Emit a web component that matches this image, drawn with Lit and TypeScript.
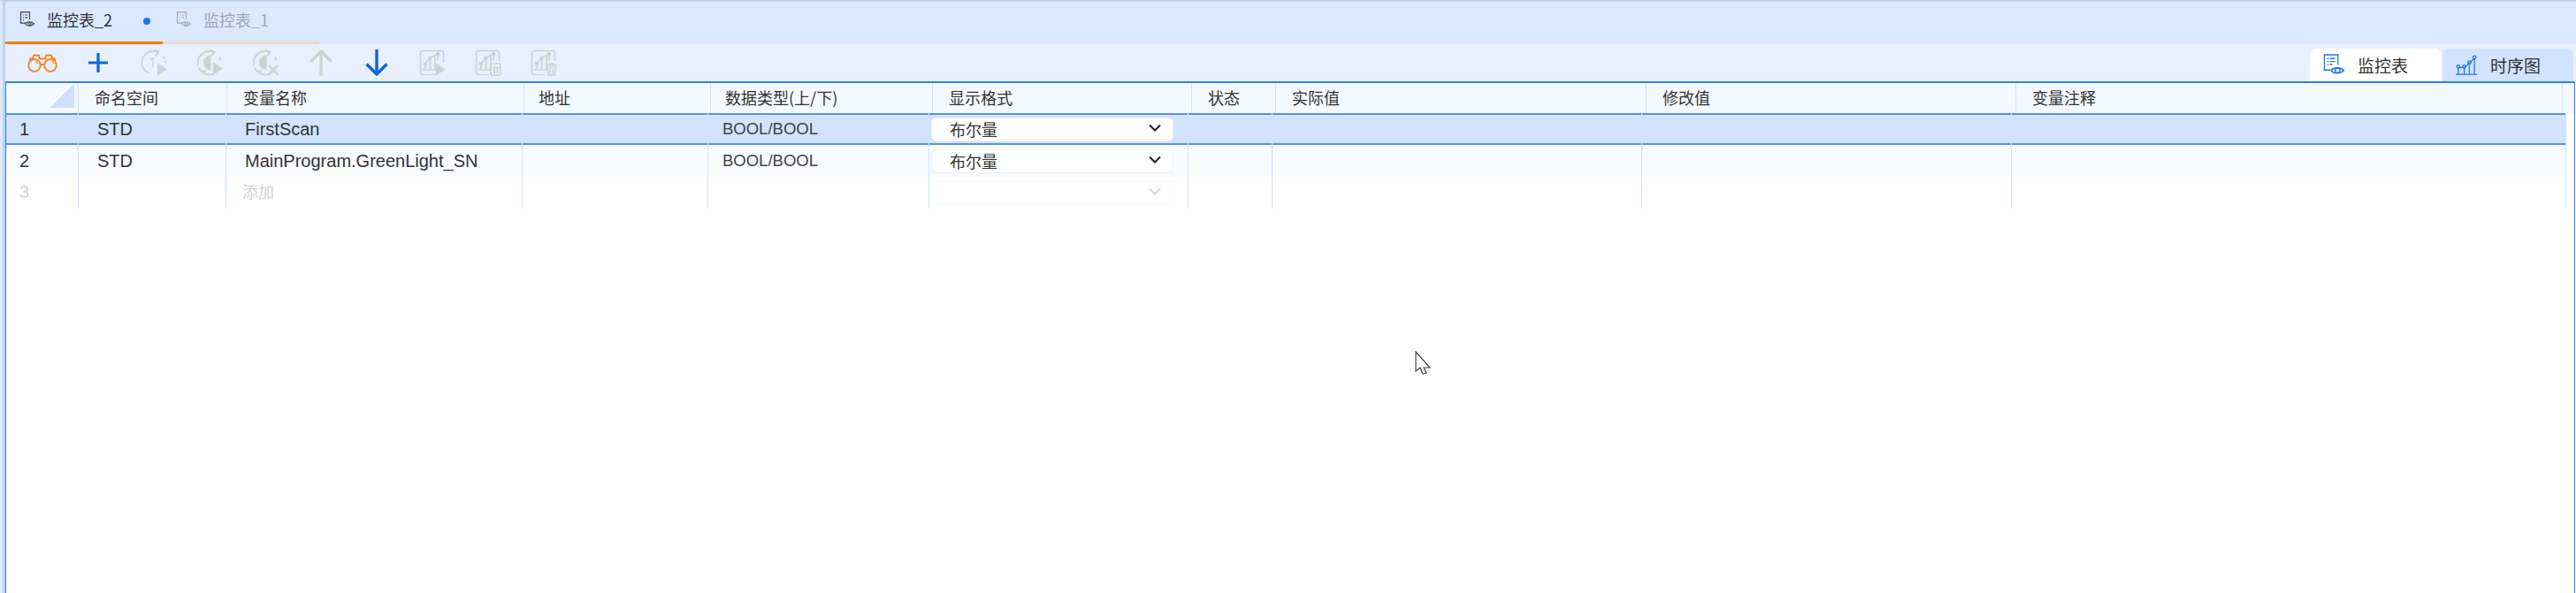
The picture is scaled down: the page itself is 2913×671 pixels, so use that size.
import { LitElement, html, css, svg } from "lit";
import { customElement } from "lit/decorators.js";

const G = "#cfd2d4";

const ic = {
  doc: (c: string) => html`<svg viewBox="0 0 24 24" width="20" height="20" fill="none" stroke=${c} stroke-width="1.4"><path d="M10 17H3V2h12v10"/><path d="M6 6h1M9 6h3M6 9.500h1M9 9.500h3M6 13h1"/><path d="M9 18c2-3.500 9-3.500 12 0-3 3.500-10 3.500-12 0z"/><circle cx="15" cy="18" r="1.800"/></svg>`,
  glasses: html`<svg viewBox="0 0 34 24" width="34" height="24" fill="none" stroke="#f5821f" stroke-width="1.800"><circle cx="8" cy="15" r="6.800"/><circle cx="26" cy="15" r="6.800"/><path d="M14.800 14h4.400"/><path d="M3 10V7.500h3.500V5c0-1 .5-1.500 1.500-1.500h4c1 0 1.500.5 1.500 1.500v2.500h7V5c0-1 .5-1.500 1.500-1.500h4c1 0 1.500.5 1.500 1.500v2.500H31V10"/><path d="M9 10.500c1.500.3 2.500 1.200 3 2.500M27 10.500c1.500.3 2.500 1.200 3 2.500" stroke-width="1.200"/></svg>`,
  plus: html`<svg viewBox="0 0 22 22" width="22" height="22" stroke="#0b66e4" stroke-width="3.200" fill="none"><path d="M11 0v22M0 11h22"/></svg>`,
  cycleOne: html`<svg viewBox="0 0 30 30" width="30" height="30" fill="none" stroke=${G} stroke-width="1.800"><path d="M19 2.600A13 13 0 1 0 10 27"/><path d="M15.500 0l5 2.800-3.500 4.400"/><path d="M26 8a13 13 0 0 1 2 7" stroke-dasharray="3 2"/><path d="M19 15.500v14l11-7z" fill=${G} stroke="none"/><path d="M11 12l3-2.500V20" stroke-width="1.300"/></svg>`,
  cycleHalf: (x: boolean) => html`<svg viewBox="0 0 30 30" width="30" height="30" fill="none" stroke=${G} stroke-width="1.900"><path d="M19.500 2.800A13 13 0 0 0 2.200 18"/><path d="M15.500 0l5 2.800-3.500 4.400"/><path d="M26 8a13 13 0 0 1 1.500 4"/><path d="M20 27.500A13 13 0 0 1 6 24.500"/><path d="M2.500 21l3.500 4 5-1"/><path d="M16.500 6.500a8.500 8.500 0 0 0 0 17z" fill=${G} stroke="none"/>${x ? svg`<path d="M19 18l10 10.500M29 18L19 28.500" stroke-width="2.600"/>` : svg`<path d="M19 14v15l11-7.500z" fill=${G} stroke="none"/>`}</svg>`,
  up: html`<svg viewBox="0 0 26 30" width="26" height="30" fill="none" stroke=${G} stroke-width="3.400"><path d="M13 30V2M1.500 13.500L13 2l11.500 11.500"/></svg>`,
  down: html`<svg viewBox="0 0 26 30" width="26" height="30" fill="none" stroke="#0b66e4" stroke-width="3.400"><path d="M13 0v28M1.500 16.500L13 28l11.500-11.500"/></svg>`,
  trend: (kind: string) => html`<svg viewBox="0 0 30 30" width="30" height="30" fill="none" stroke=${G} stroke-width="1.700"><path d="M${kind === "play" ? "19 28.500H4" : "16 28.500H4"}a2.500 2.500 0 0 1-2.500-2.500V4A2.500 2.500 0 0 1 4 1.500h21A2.500 2.500 0 0 1 27.500 4v${kind === "play" ? 11 : 9}"/><path d="M4 23h14M7 23v-7l5.500-6.500L21 5M12.500 23V9.500M18 23V7M21 5v8"/><circle cx="7" cy="16" r="1.400" fill=${G}/><circle cx="12.500" cy="9.500" r="1.400" fill=${G}/><circle cx="21" cy="5" r="1.400" fill=${G}/>
    ${kind === "play" ? svg`<path d="M19 15.500v14l11-7z" fill=${G} stroke="none"/>` : kind === "pause" ? svg`<rect x="18" y="16" width="11" height="13" rx="1.500"/><path d="M22 19v8M25.500 19v8" stroke-width="2"/>` : svg`<path d="M17 18h13M21 18v-2h5v2" stroke-width="1.600"/><path d="M19 20.500h9l-.8 8.500h-7.400z"/><path d="M22 22.500v5M25 22.500v5" stroke-width="1.500"/>`}</svg>`,
  watch: html`<svg viewBox="0 0 26 26" width="25" height="25" fill="none" stroke="#1f76ee" stroke-width="1.400"><path d="M8.500 19H1.500V1h16v12"/><path d="M5 5.500h1.500M8 5.500h6M5 9h1.500M8 9h6M5 12.500h1.500M8 12.500h3"/><path d="M9.500 19.500c3-4 11-4 15 0-4 4-12 4-15 0z" stroke-width="1.600"/><circle cx="17" cy="19.500" r="2.800"/></svg>`,
  seq: html`<svg viewBox="0 0 26 26" width="25" height="25" fill="none" stroke="#1f76ee" stroke-width="1.300"><path d="M0 24h25M3 24v-8M10 24v-8M16 24V11M22 24V5M3 16h7M10 16l6-5M16 11l6-6"/><circle cx="3" cy="15" r="1.800"/><circle cx="10" cy="15" r="1.800"/><circle cx="16" cy="10" r="1.800"/><circle cx="22" cy="4" r="1.800"/></svg>`,
  chev: (c: string) => html`<svg viewBox="0 0 14 9" width="14" height="9" fill="none" stroke=${c} stroke-width="2"><path d="M1 1.500l6 6 6-6"/></svg>`,
};

type Row = { n: string; ns: string; name: string; type: string; fmt: string; cls: string };
const rows: Row[] = [
  { n: "1", ns: "STD", name: "FirstScan", type: "BOOL/BOOL", fmt: "布尔量", cls: "sel" },
  { n: "2", ns: "STD", name: "MainProgram.GreenLight_SN", type: "BOOL/BOOL", fmt: "布尔量", cls: "alt" },
  { n: "3", ns: "", name: "添加", type: "", fmt: "", cls: "ghost" },
];

@customElement("app-root")
export class AppRoot extends LitElement {
  static styles = css`
    :host { display: block; position: relative; height: 671px; overflow: hidden; background: #fff; font-family: "Noto Sans CJK SC", "Noto Sans", sans-serif; color: #333; font-size: 18px; }
    .frame { height: 671px; box-sizing: border-box; border-top: 2px solid #bdd0ee; border-left: 3px solid #dfe9fb; display: flex; flex-direction: column; }
    .tabs { height: 48px; box-sizing: border-box; background: #dbe9ff; display: flex; border-left: 3px solid #bcd4fb; }
    .tab { width: 178px; box-sizing: border-box; display: flex; align-items: center; gap: 12px; padding: 0 0 5px 15px; border-bottom: 3px solid #f77b00; position: relative; height: 48px; }
    .tab.off { border-bottom-color: #ecd9cf; color: #a3a8b0; width: 177px; padding-left: 14px; }
    .dot { position: absolute; right: 14px; top: 18px; width: 8px; height: 8px; border-radius: 50%; background: #1f76ee; }
    .tools { height: 42px; box-sizing: border-box; background: #e8f0fe; display: flex; align-items: center; border-left: 3px solid #bcd4fb; padding-left: 10px; position: relative; }
    .tool { width: 63px; display: flex; justify-content: center; align-items: center; }
    .views { position: absolute; right: 3px; bottom: 0; display: flex; gap: 1px; font-size: 19px; }
    .view { height: 37px; box-sizing: border-box; display: flex; align-items: center; border-radius: 8px 8px 0 0; background: #d1e3fe; width: 148px; padding-left: 15px; gap: 14px; }
    .view.on { background: #fff; width: 149px; gap: 14px; }
    .body { flex: 1; border-left: 3px solid #bcd4fb; display: flex; flex-direction: column; min-height: 0; }
    .table { flex: 1; border-left: 1px solid #2b7ff5; border-right: 1px solid #2b7ff5; margin-right: 1px; }
    .grid { display: grid; }
    .head { grid-template-columns: 82px 168px 336px 211px 251px 293px 95px 419px 418px 618px 13px; height: 36px; box-sizing: border-box; background: #f4f8ff; border-top: 2px solid #2b7ff5; }
    .head > div { box-sizing: border-box; border-right: 1px solid #d3e3fb; padding: 0 0 3px 18px; display: flex; align-items: center; }
    .head > .t { padding-left: 16px; }
    .head > .last { border-right: 0; }
    .corner { position: relative; }
    .corner::after { content: ""; position: absolute; right: 4px; bottom: 6px; width: 27px; height: 27px; background: linear-gradient(135deg, transparent 50%, #cfe0fb 50%); }
    .row { grid-template-columns: 82px 167px 335px 210px 250px 293px 95px 418px 418px 627px; margin-right: 9px; height: 36px; box-sizing: border-box; font-family: "Liberation Sans", "Noto Sans CJK SC", sans-serif; font-size: 20px; }
    .row > div { box-sizing: border-box; border-right: 1px solid #cfe2fd; display: flex; align-items: center; padding-left: 21px; white-space: nowrap; min-width: 0; }
    .row.sel { background: #d1e3fe; }
    .row.sel > div { border: 0; border-top: 2px solid #5090fa; border-bottom: 2px solid #5090fa; margin-right: 1px; }
    .row.alt { background: #fafbff; }
    .row.ghost { color: #cfd2d4; }
    .row > .idx { padding-left: 15px; }
    .row.ghost > .idx { padding-bottom: 2px; }
    .row > .name.add { padding: 0 0 5px 18px; font-size: 18px; }
    .row > .type { padding-left: 16px; font-size: 18.500px; color: #444; }
    .row > .fmt { padding: 0 0 0 2px; }
    .sel-box { width: 274px; height: 27px; box-sizing: border-box; background: #fff; border: 1px solid #eef0f5; border-radius: 5px; display: flex; align-items: center; justify-content: space-between; padding: 0 13px 0 20px; font-family: "Noto Sans CJK SC", sans-serif; font-size: 18px; }
    .ghost .sel-box { border-color: #f8f9fb; }
    .chev { margin-bottom: 4px; display: flex; }
    .cursor { position: absolute; left: 1600px; top: 397px; }
  `;

  render() {
    return html`
      <div class="frame">
        <div class="tabs">
          <div class="tab">${ic.doc("#444")}<span>监控表_2</span><i class="dot"></i></div>
          <div class="tab off">${ic.doc("#a3a8b0")}<span>监控表_1</span></div>
        </div>
        <div class="tools">
          <div class="tool">${ic.glasses}</div>
          <div class="tool">${ic.plus}</div>
          <div class="tool">${ic.cycleOne}</div>
          <div class="tool">${ic.cycleHalf(false)}</div>
          <div class="tool">${ic.cycleHalf(true)}</div>
          <div class="tool">${ic.up}</div>
          <div class="tool">${ic.down}</div>
          <div class="tool">${ic.trend("play")}</div>
          <div class="tool">${ic.trend("pause")}</div>
          <div class="tool">${ic.trend("trash")}</div>
          <div class="views">
            <div class="view on">${ic.watch}<span>监控表</span></div>
            <div class="view">${ic.seq}<span>时序图</span></div>
          </div>
        </div>
        <div class="body">
          <div class="table">
            <div class="grid head">
              <div class="corner"></div><div>命名空间</div><div>变量名称</div><div class="t">地址</div><div class="t">数据类型(上/下)</div><div>显示格式</div><div>状态</div><div>实际值</div><div>修改值</div><div>变量注释</div><div class="last"></div>
            </div>
            ${rows.map(
              (r) => html`<div class="grid row ${r.cls}">
                <div class="idx">${r.n}</div>
                <div class="ns">${r.ns}</div>
                <div class="name ${r.cls === "ghost" ? "add" : ""}">${r.name}</div>
                <div></div>
                <div class="type">${r.type}</div>
                <div class="fmt"><div class="sel-box"><span>${r.fmt}</span><span class="chev">${ic.chev(r.cls === "ghost" ? "#d5d7da" : "#222")}</span></div></div>
                <div></div><div></div><div></div><div></div>
              </div>`
            )}
          </div>
        </div>
      </div>
      <svg class="cursor" width="20" height="28" viewBox="0 0 20 28" fill="#fff" stroke="#444" stroke-width="1.200"><path d="M1 1v22l5-4 3 7 4-1-3-6h7z"/></svg>
    `;
  }
}
